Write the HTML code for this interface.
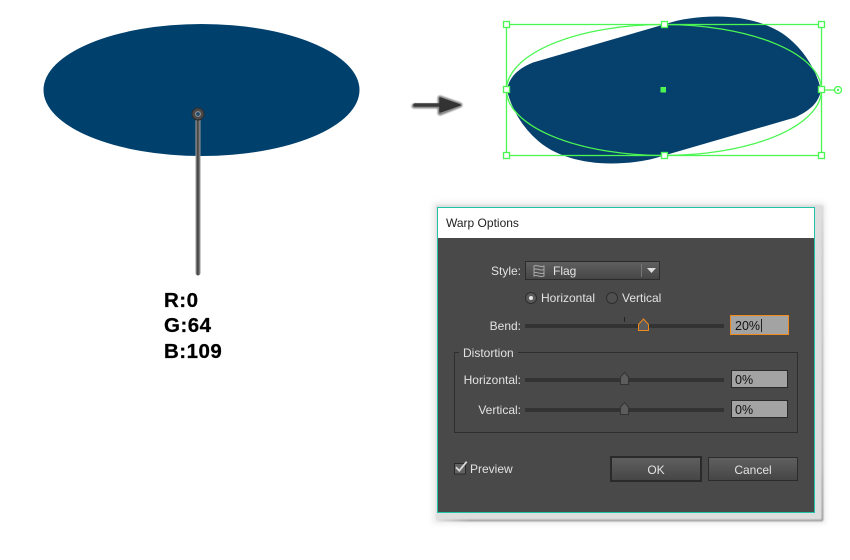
<!DOCTYPE html>
<html><head><meta charset="utf-8"><style>
html,body{margin:0;padding:0;background:#fff;width:850px;height:560px;overflow:hidden}
svg{position:absolute;left:0;top:0;display:block}
text{font-family:"Liberation Sans",sans-serif}
.d{font-size:12px;fill:#e2e2e2}
.v{font-size:12.5px;fill:#111}
.rgb{font-size:20.5px;font-weight:700;fill:#000;letter-spacing:.5px;stroke:#000;stroke-width:.25px}
</style></head><body>
<svg width="850" height="560" viewBox="0 0 850 560" xmlns="http://www.w3.org/2000/svg">
<defs>
<linearGradient id="btn" x1="0" y1="0" x2="0" y2="1"><stop offset="0" stop-color="#606060"/><stop offset="1" stop-color="#454545"/></linearGradient>
<linearGradient id="stem" x1="0" y1="0" x2="1" y2="0"><stop offset="0" stop-color="#aaa"/><stop offset=".45" stop-color="#3c3c3c"/><stop offset="1" stop-color="#a0a0a0"/></linearGradient>
<linearGradient id="edge" gradientUnits="userSpaceOnUse" x1="0" y1="205" x2="0" y2="520"><stop offset="0" stop-color="#d8d8d8"/><stop offset=".12" stop-color="#c4c4c4"/><stop offset=".8" stop-color="#a8a8a8"/><stop offset="1" stop-color="#8a8a8a"/></linearGradient>
<linearGradient id="edgeB" gradientUnits="userSpaceOnUse" x1="436" y1="0" x2="470" y2="0"><stop offset="0" stop-color="#e0e0e0"/><stop offset="1" stop-color="#8a8a8a"/></linearGradient>
<filter id="b1" x="-20%" y="-20%" width="140%" height="140%"><feGaussianBlur stdDeviation="3"/></filter>
<filter id="b3" x="-20%" y="-20%" width="140%" height="140%"><feGaussianBlur stdDeviation=".9"/></filter>
<filter id="b2" x="-50%" y="-50%" width="200%" height="200%"><feGaussianBlur stdDeviation=".7"/></filter>
</defs>

<!-- left ellipse -->
<ellipse cx="201.5" cy="90" rx="158" ry="66" fill="#00406d"/>
<rect x="195.500" y="118" width="5" height="157.500" rx="2.500" fill="url(#stem)"/>
<circle cx="198" cy="114" r="6" fill="#4a4a4a" stroke="#2c2c2c" stroke-width="1"/>
<circle cx="198" cy="114" r="2.400" fill="#1d4a6c" stroke="#999" stroke-width="1"/>

<!-- RGB -->
<text class="rgb" x="164" y="307">R:0</text>
<text class="rgb" x="164" y="332">G:64</text>
<text class="rgb" x="164" y="358">B:109</text>

<!-- arrow -->
<g>
<path d="M414 106H442M440 98L460 105L440 113Z" fill="#888" stroke="#888" stroke-width="5" stroke-linecap="round" stroke-linejoin="round" filter="url(#b2)"/>
<path d="M415 105H442" stroke="#3a3a3a" stroke-width="3.500" stroke-linecap="round"/>
<path d="M440 98L460 105L440 112Z" fill="#333" stroke="#333" stroke-width="1.500" stroke-linejoin="round"/>
</g>

<!-- warped shape -->
<path d="M507 90C509 78 517 69 533 62.500L664 24.500C680 19 698 16.500 717 16.500C745 16.500 775 24 793 42C806 54 817 72 821 90C819 102 811 110 795 117.500L664 155.500C648 161 630 163.500 611 163.500C583 163.500 553 156 535 138C522 126 511 108 507 90Z" fill="#06406d"/>
<g fill="none" stroke="#4cf652" stroke-width="1.300">
<rect x="506.500" y="24.500" width="315" height="131"/>
<ellipse cx="664" cy="90" rx="157.500" ry="65.500"/>
<path d="M821.500 90H834"/>
<circle cx="838" cy="90" r="3.500"/>
</g>
<circle cx="838" cy="90" r="1.200" fill="#4cf652"/>
<g fill="#fff" stroke="#4cf652" stroke-width="1.300">
<rect x="503.500" y="21.500" width="6" height="6"/><rect x="661.500" y="21.500" width="6" height="6"/><rect x="818.500" y="21.500" width="6" height="6"/>
<rect x="503.500" y="86.500" width="6" height="6"/><rect x="818.500" y="86.500" width="6" height="6"/>
<rect x="503.500" y="152.500" width="6" height="6"/><rect x="661.500" y="152.500" width="6" height="6"/><rect x="818.500" y="152.500" width="6" height="6"/>
</g>
<rect x="660.500" y="87" width="5.500" height="5.500" fill="#4cf652"/>

<!-- dialog shadow -->
<rect x="433" y="203" width="392" height="320" fill="#e8e8e8" filter="url(#b1)"/>
<rect x="436" y="205" width="386" height="315" fill="#dedede" filter="url(#b3)"/>
<g filter="url(#b3)" fill="none" stroke-width="1.500">
<path d="M822.500 206V520.500" stroke="url(#edge)"/>
<path d="M438 520.500H822.500" stroke="url(#edgeB)"/>
</g>
<!-- dialog -->
<rect x="437.500" y="207.500" width="377" height="305" fill="#494949" stroke="#1fc4a6" stroke-width="1"/>
<rect x="438" y="208" width="376" height="30" fill="#fff"/>
<text x="446" y="227" font-size="12" fill="#222">Warp Options</text>

<!-- style -->
<text class="d" x="521" y="275" text-anchor="end">Style:</text>
<rect x="525.500" y="261.500" width="134" height="18" fill="url(#btn)" stroke="#2c2c2c"/>
<path d="M534 266C537 264 540 268 544 266V276C540 278 537 274 534 276ZM534 269.500C537 267.500 540 271.500 544 269.500M534 273C537 271 540 275 544 273" fill="none" stroke="#a8a8a8" stroke-width="1"/>
<text class="d" x="553" y="275">Flag</text>
<path d="M641.500 264V277" stroke="#777"/>
<path d="M647 268H656L651.500 273Z" fill="#ddd"/>

<!-- radios -->
<circle cx="531" cy="298" r="5.500" fill="#5a5a5a" stroke="#2e2e2e"/>
<circle cx="531" cy="298" r="2" fill="#e8e8e8"/>
<text class="d" x="541" y="302">Horizontal</text>
<circle cx="612" cy="298" r="5.500" fill="#4f4f4f" stroke="#2e2e2e"/>
<text class="d" x="622" y="302">Vertical</text>

<!-- bend -->
<text class="d" x="521" y="330" text-anchor="end">Bend:</text>
<rect x="525" y="324" width="199" height="4" fill="#333"/>
<path d="M624.500 317V322" stroke="#222"/>
<path d="M638.500 330.500V324.500L643.500 319L648.500 324.500V330.500Z" fill="#5c5c5c" stroke="#f08a1d" stroke-width="1"/>
<rect x="730.500" y="315.500" width="58" height="19" fill="#a3a3a3" stroke="#f08a1d"/>
<text class="v" x="735" y="330">20%</text>
<path d="M761.500 319V332" stroke="#222"/>

<!-- distortion -->
<path d="M459 352.500H454.500V432.500H797.500V352.500H518" fill="none" stroke="#2e2e2e"/>
<text class="d" x="463" y="357">Distortion</text>

<text class="d" x="521" y="384" text-anchor="end">Horizontal:</text>
<rect x="525" y="378" width="199" height="4" fill="#333"/>
<path d="M620.500 384.500V377L624.500 372.500L628.500 377V384.500Z" fill="#5c5c5c" stroke="#333"/>
<rect x="731.500" y="370.500" width="56" height="17" fill="#a3a3a3" stroke="#2a2a2a"/>
<text class="v" x="735" y="384">0%</text>

<text class="d" x="521" y="414" text-anchor="end">Vertical:</text>
<rect x="525" y="408" width="199" height="4" fill="#333"/>
<path d="M620.500 414.500V407L624.500 402.500L628.500 407V414.500Z" fill="#5c5c5c" stroke="#333"/>
<rect x="731.500" y="400.500" width="56" height="17" fill="#a3a3a3" stroke="#2a2a2a"/>
<text class="v" x="735" y="414">0%</text>

<!-- preview -->
<rect x="454.500" y="463.500" width="11" height="10.500" fill="#626262" stroke="#2a2a2a"/>
<path d="M456 467.300L459.300 470.700L466.700 461.700" fill="none" stroke="#dcdcdc" stroke-width="1.800"/>
<text class="d" x="470" y="473">Preview</text>

<!-- buttons -->
<rect x="611" y="457" width="90" height="24" fill="url(#btn)" stroke="#2a2a2a" stroke-width="2"/>
<text class="d" x="656" y="474" text-anchor="middle">OK</text>
<rect x="708.500" y="457.500" width="89" height="23" fill="url(#btn)" stroke="#2c2c2c"/>
<text class="d" x="753" y="474" text-anchor="middle">Cancel</text>
</svg>
</body></html>
